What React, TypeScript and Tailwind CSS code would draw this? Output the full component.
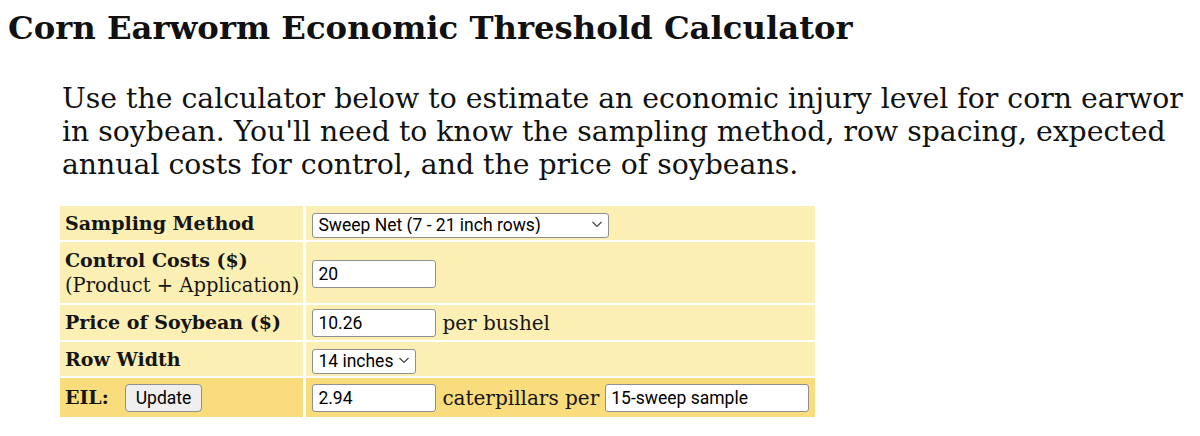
import { useState } from "react";

const serif = "font-['DejaVu_Serif','Liberation_Serif',serif]";
const sans = "font-['Roboto','Liberation_Sans',sans-serif]";

const fieldCls = `${sans} h-[28px] shrink-0 rounded-[3px] border border-[#8f8f8f] bg-white px-[5px] text-[17.5px] text-black outline-none`;

function Chevron() {
  return (
    <svg
      width="12"
      height="8"
      viewBox="0 0 12 8"
      className="pointer-events-none absolute top-1/2 right-[6px] -translate-y-1/2"
    >
      <path d="M1.5 2 6 6.5 10.5 2" fill="none" stroke="#444" strokeWidth="1.2" />
    </svg>
  );
}

function Picker({
  value,
  options,
  width,
}: {
  value: string;
  options: string[];
  width: string;
}) {
  return (
    <span className={`relative inline-block align-middle ${width}`}>
      <select
        defaultValue={value}
        className={`${sans} h-[25px] w-full appearance-none rounded-[3px] border border-[#8f8f8f] bg-white pr-[22px] pl-[5px] text-[17.5px] leading-none text-black`}
      >
        {options.map((o) => (
          <option key={o}>{o}</option>
        ))}
      </select>
      <Chevron />
    </span>
  );
}

export default function App() {
  const [cost, setCost] = useState("20");
  const [price, setPrice] = useState("10.26");
  const [eil, setEil] = useState("2.94");

  const label = `${serif} w-[244px] pl-[5px] pr-1 text-[19px] font-bold whitespace-nowrap text-[#151515]`;
  const cell = `${serif} px-[6px] text-[20px] whitespace-nowrap text-[#151515]`;
  const light = "bg-[#fcefb4]";
  const dark = "bg-[#f9dc7c]";

  return (
    <div className={`${serif} min-h-[436px] bg-white text-[#111]`}>
      <h1 className="px-[8px] pt-[9px] text-[32.3px] leading-[38px] font-bold">
        Corn Earworm Economic Threshold Calculator
      </h1>

      <p className="mt-[35px] ml-[62px] text-[28.3px] leading-[33px] whitespace-nowrap">
        Use the calculator below to estimate an economic injury level for corn earwor
        <br />
        in soybean. You'll need to know the sampling method, row spacing, expected
        <br />
        annual costs for control, and the price of soybeans.
      </p>

      <table className="mt-[23px] ml-[57px] w-[760px] border-separate border-spacing-x-[3px] border-spacing-y-[2px]">
        <tbody>
          <tr className="h-[34px]">
            <td className={`${label} ${light}`}>Sampling Method</td>
            <td className={`${cell} ${light}`}>
              <Picker
                value="Sweep Net (7 - 21 inch rows)"
                options={["Sweep Net (7 - 21 inch rows)", "Sweep Net (30 inch rows)", "Drop Cloth"]}
                width="w-[297px]"
              />
            </td>
          </tr>
          <tr className="h-[61px]">
            <td className={`${label} ${light}`}>
              <div className="leading-[25px]">Control Costs ($)</div>
              <div className="text-[19.5px] leading-[25px] font-normal">(Product + Application)</div>
            </td>
            <td className={`${cell} ${light}`}>
              <input
                className={`${fieldCls} w-[124px]`}
                value={cost}
                onChange={(e) => setCost(e.target.value)}
              />
            </td>
          </tr>
          <tr className="h-[35px]">
            <td className={`${label} ${light}`}>Price of Soybean ($)</td>
            <td className={`${cell} ${light}`}>
              <div className="flex items-center gap-[6px]">
                <input
                  className={`${fieldCls} w-[124px]`}
                  value={price}
                  onChange={(e) => setPrice(e.target.value)}
                />
                <span>per bushel</span>
              </div>
            </td>
          </tr>
          <tr className="h-[34px]">
            <td className={`${label} ${light}`}>Row Width</td>
            <td className={`${cell} ${light}`}>
              <Picker value="14 inches" options={["7 inches", "14 inches", "21 inches"]} width="w-[104px]" />
            </td>
          </tr>
          <tr className="h-[39px]">
            <td className={`${label} ${dark}`}>
              <div className="flex items-center gap-[16px]">
                <span>EIL:</span>
                <button
                  className={`${sans} h-[28px] rounded-[4px] border border-[#8f8f8f] bg-[#efefef] px-[10px] text-[17.5px] font-normal text-black`}
                >
                  Update
                </button>
              </div>
            </td>
            <td className={`${cell} ${dark}`}>
              <div className="flex items-center gap-[6px]">
                <input
                  className={`${fieldCls} w-[124px]`}
                  value={eil}
                  onChange={(e) => setEil(e.target.value)}
                />
                <span>caterpillars per</span>
                <input className={`${fieldCls} w-[204px]`} defaultValue="15-sweep sample" />
              </div>
            </td>
          </tr>
        </tbody>
      </table>
    </div>
  );
}
